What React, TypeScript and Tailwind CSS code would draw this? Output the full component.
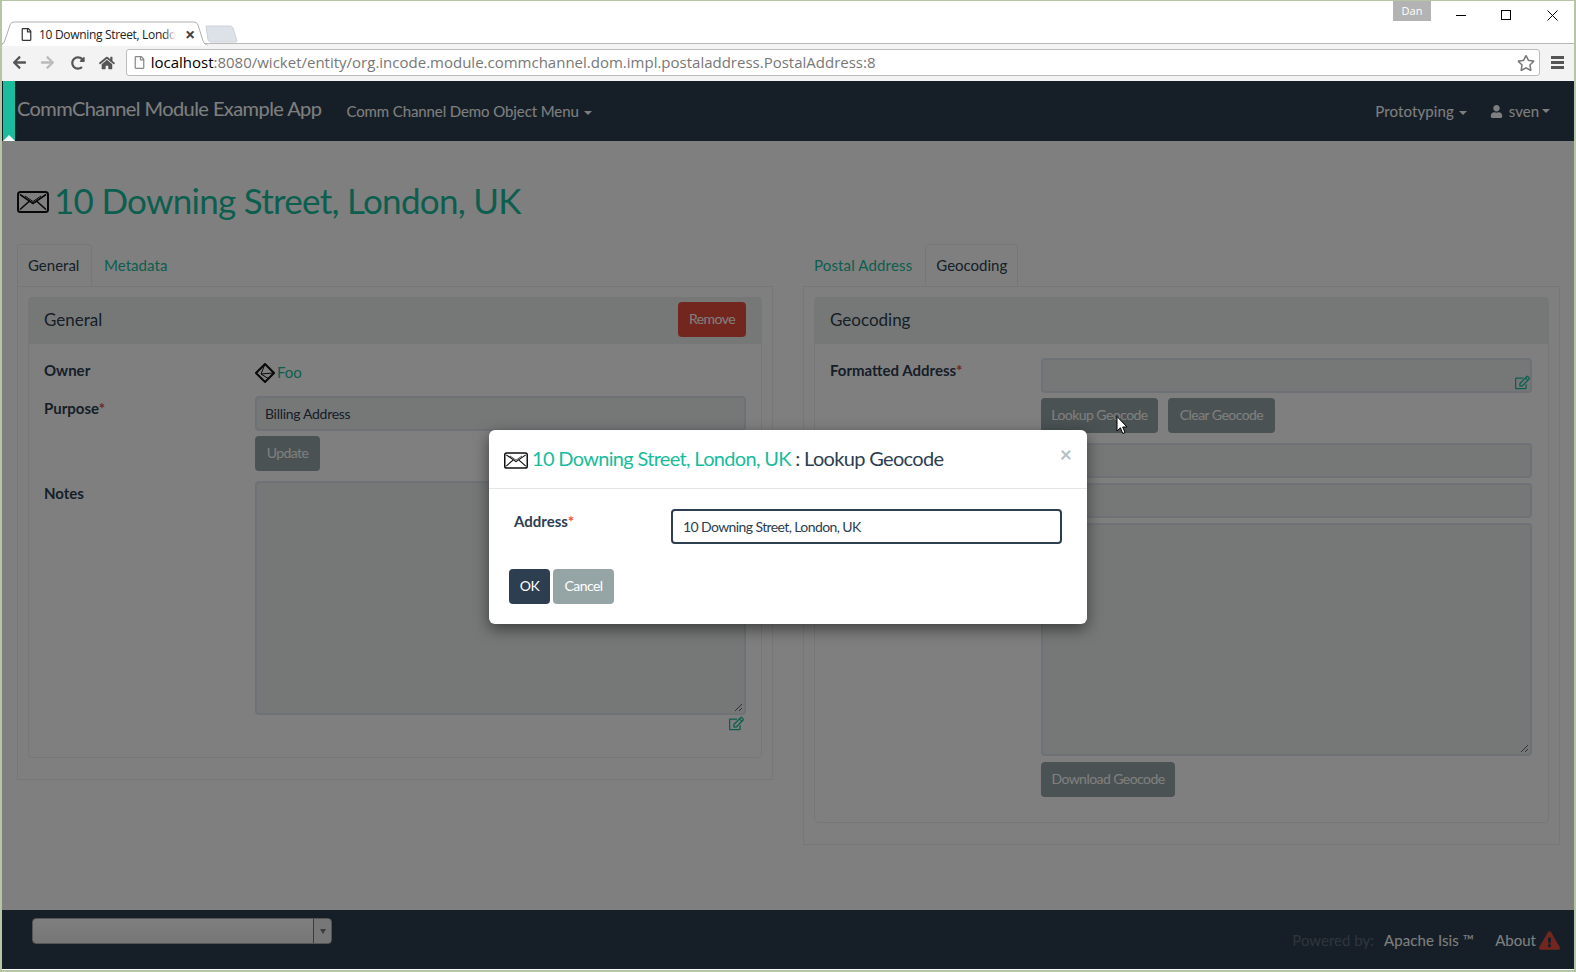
import { FaArrowLeft, FaArrowRight, FaRedoAlt, FaHome, FaRegFile, FaRegStar, FaUser, FaRegEdit, FaExclamationTriangle } from 'react-icons/fa';

const Envelope = ({ className }: { className: string }) => (
    <svg viewBox="0 0 32 22" className={className} fill="none" stroke="#111" strokeWidth="1.6">
        <rect x="1" y="1" width="30" height="20" rx="2.5" strokeWidth="2" />
        <path d="M3 3.5 L16 12.5 L29 3.5 M3 18.5 L12 10.5 M29 18.5 L20 10.5" />
        <path d="M8 5 L16 10.5 L24 5" strokeWidth="1" />
    </svg>
);

const Caret = ({ className = 'ml-[5px]' }: { className?: string }) => (
    <span className={`inline-block w-0 h-0 align-middle border-x-[4px] border-x-transparent border-t-[4px] border-t-white ${className}`} />
);

const ResizeGrip = () => (
    <svg viewBox="0 0 9 9" className="absolute right-[1px] bottom-[1px] w-[9px] h-[9px]" stroke="#666" fill="none">
        <path d="M1 8 L8 1 M5 8 L8 5" />
    </svg>
);

const TextBox = ({ className = '', value = '', grip }: { className?: string; value?: string; grip?: boolean }) => (
    <div className={`relative bg-[#ecf0f1] border-2 border-[#dce4ec] rounded-[4px] px-[8px] text-[14px] tracking-[-0.3px] text-[#2c3e50] flex items-center ${className}`}>
        {value}
        {grip && <ResizeGrip />}
    </div>
);

const Btn = ({ label, className }: { label: string; className: string }) => (
    <div className={`h-[35px] pb-[3px] rounded-[4px] text-white text-[14px] tracking-[-0.55px] whitespace-nowrap flex items-center justify-center ${className}`}>
        {label}
    </div>
);

const EditIcon = ({ className = '' }: { className?: string }) => <FaRegEdit className={`text-[15px] text-[#18bc9c] ${className}`} />;

const Tab = ({ label, active, className = '' }: { label: string; active?: boolean; className?: string }) =>
    active ? (
        <div className={`h-[42px] flex items-center text-[15px] text-[#2c3e50] border border-b-0 border-[#ecf0f1] bg-white rounded-t-[4px] -mb-px relative ${className}`}>
            {label}
        </div>
    ) : (
        <div className={`h-[42px] flex items-center text-[15px] text-[#18bc9c] ${className}`}>{label}</div>
    );

const BrowserChrome = () => (
    <div className="shrink-0 font-['Open_Sans',sans-serif]">
        <div className="h-[43px] relative bg-white border-b border-[#b8b8b8]">
            <svg viewBox="0 0 210 25" className="absolute left-0 top-[20px] w-[210px] h-[25px]">
                <path d="M0 23 H0 Q2 23 3 19 L8 4 Q9 1 12 1 H192 Q195 1 196 4 L201 20 Q202 23 205 24 V25 H0 Z" fill="#fff" stroke="#b0b0b0" />
                <path d="M0 25 H205" stroke="#fff" strokeWidth="2" />
            </svg>
            <div className="absolute left-[18px] top-[24px] flex items-center">
                <FaRegFile className="text-[13px] text-[#333] shrink-0" />
                <span className="relative ml-[6px] text-[12px] leading-[15px] tracking-[-0.32px] text-[#222] w-[137px] whitespace-nowrap">
                    10 Downing Street, Londo
                    <span className="absolute right-0 top-0 w-[12px] h-full bg-linear-to-r from-white/0 to-white" />
                </span>
                <span className="ml-[9px] text-[18px] font-bold leading-none text-[#444]">×</span>
            </div>
            <svg viewBox="0 0 34 18" className="absolute left-[202px] top-[24px] w-[34px] h-[18px]">
                <path d="M2 1 H26 Q28 1 29 3 L33 16 Q33 17 31 17 H7 Q5 17 4 15 Z" fill="#dde1e8" stroke="#ccd0d8" />
            </svg>
            <div className="absolute left-[1391px] top-0 w-[38px] h-[20px] bg-[#b3b3b3] text-[11px] text-white flex items-center justify-center">Dan</div>
            <div className="absolute left-[1454px] top-[14px] w-[10px] h-px bg-black" />
            <div className="absolute left-[1499px] top-[9px] w-[10px] h-[10px] border border-black" />
            <svg viewBox="0 0 11 11" className="absolute left-[1545px] top-[9px] w-[11px] h-[11px]" stroke="#000" fill="none">
                <path d="M0.5 0.5 L10.5 10.5 M10.5 0.5 L0.5 10.5" />
            </svg>
        </div>
        <div className="h-[37px] bg-[#f3f3f3] flex items-center pl-[10px] pr-[10px]">
            <FaArrowLeft className="text-[15px] text-[#555]" />
            <FaArrowRight className="ml-[13px] text-[15px] text-[#bbb]" />
            <FaRedoAlt className="ml-[16px] text-[14px] text-[#555]" />
            <FaHome className="ml-[14px] text-[16px] text-[#555]" />
            <div className="ml-[11px] w-[1423px] h-[27px] bg-white border border-[#bcbcbc] rounded-[3px] flex items-center pl-[6px] text-[15px] text-[#777] whitespace-nowrap">
                <FaRegFile className="text-[13px] text-[#888] mr-[5px] shrink-0" />
                <span className="text-black">localhost</span>
                <span>:8080/wicket/entity/org.incode.module.commchannel.dom.impl.postaladdress.PostalAddress:8</span>
                <FaRegStar className="ml-auto mr-[4px] text-[18px] text-[#777]" />
            </div>
            <div className="ml-[11px] flex flex-col gap-[2px]">
                <div className="w-[13px] h-[3px] bg-[#555]" />
                <div className="w-[13px] h-[3px] bg-[#555]" />
                <div className="w-[13px] h-[3px] bg-[#555]" />
            </div>
        </div>
    </div>
);

const App = () => {
    return (
        <div className="relative w-[1576px] h-[972px] overflow-hidden bg-white font-['Lato',sans-serif] border-t border-x-2 border-b-2 border-[#b5c6a5]">
            <BrowserChrome />

            <div className="relative h-[888px] flex flex-col">
                <nav className="h-[60px] shrink-0 bg-[#2c3e50] text-white flex items-center pl-[15px] pr-[24px]">
                    <span className="text-[20px] tracking-[-0.57px] mb-[6px]">CommChannel Module Example App</span>
                    <span className="ml-[25px] text-[15px] tracking-[-0.1px]">Comm Channel Demo Object Menu<Caret /></span>
                    <span className="ml-auto text-[15px] tracking-[0.1px]">Prototyping<Caret /></span>
                    <span className="ml-[23px] text-[15px] flex items-center">
                        <FaUser className="text-[13px] mr-[6px]" />sven<Caret className="ml-[3px]" />
                    </span>
                </nav>

                <main className="flex-1 bg-white px-[15px]">
                    <h1 className="mt-[39px] h-[40px] flex items-center text-[35px] tracking-[-0.72px] text-[#18bc9c] whitespace-nowrap">
                        <Envelope className="w-[32px] h-[22px] mr-[5px] mt-[4px]" />
                        10 Downing Street, London, UK
                    </h1>

                    <div className="mt-[24px] grid grid-cols-[756px_757px] gap-x-[30px] items-start">
                        <div>
                            <div className="flex"><Tab label="General" active className="w-[75px] pl-[10px]" /><Tab label="Metadata" className="pl-[12px] tracking-[0.05px]" /></div>
                            <div className="border border-[#ecf0f1] p-[10px] pb-[21px]">
                                <div className="border border-[#ecf0f1] rounded-[4px] h-[461px]">
                                    <div className="h-[46px] bg-[#ecf0f1] flex items-start pt-[4px] pl-[15px] pr-[15px] text-[17px] text-[#2c3e50]">
                                        <span className="mt-[5px]">General</span>
                                        <Btn label="Remove" className="ml-auto w-[68px] bg-[#e74c3c]" />
                                    </div>
                                    <div className="grid grid-cols-[211px_491px] pl-[15px] pt-[15px] text-[15px] text-[#2c3e50]">
                                        <div className="font-bold h-[37px]">Owner</div>
                                        <div className="h-[37px] flex items-start text-[15px] text-[#18bc9c]">
                                            <svg viewBox="0 0 20 20" className="w-[20px] h-[20px] mr-[2px] mt-[4px]" fill="none" stroke="#111" strokeWidth="2">
                                                <path d="M10 1 L19 10 L10 19 L1 10 Z" />
                                                <path d="M10 1 L6 11 L14 16 M6 11 L18 10" strokeWidth="1" />
                                            </svg>
                                            <span className="mt-[2px]">Foo</span>
                                        </div>
                                        <div className="font-bold pt-px">Purpose<span className="text-[#e74c3c]">*</span></div>
                                        <div>
                                            <TextBox className="h-[35px]" value="Billing Address" />
                                            <Btn label="Update" className="mt-[5px] w-[65px] bg-[#95a5a6]" />
                                        </div>
                                        <div className="font-bold mt-[11px]">Notes</div>
                                        <div className="mt-[10px]">
                                            <TextBox className="h-[234px]" grip />
                                            <div className="flex justify-end pr-[2px] mt-px"><EditIcon /></div>
                                        </div>
                                    </div>
                                </div>
                            </div>
                        </div>

                        <div>
                            <div className="flex"><Tab label="Postal Address" className="pl-[11px] pr-[13px] tracking-[0.15px]" /><Tab label="Geocoding" active className="px-[10px]" /></div>
                            <div className="border border-[#ecf0f1] p-[10px] pb-[21px]">
                                <div className="border border-[#ecf0f1] rounded-[4px] h-[526px]">
                                    <div className="h-[46px] pb-[2px] bg-[#ecf0f1] flex items-center pl-[15px] text-[17px] text-[#2c3e50]">Geocoding</div>
                                    <div className="grid grid-cols-[211px_491px] pl-[15px] pt-[14px] text-[15px] text-[#2c3e50]">
                                        <div className="font-bold pt-[1px]">Formatted Address<span className="text-[#e74c3c]">*</span></div>
                                        <div className="flex flex-col items-start gap-[5px]">
                                            <div className="relative w-full">
                                                <TextBox className="h-[35px] w-full" />
                                                <EditIcon className="absolute right-[2px] bottom-[3px]" />
                                            </div>
                                            <div className="flex gap-[10px]">
                                                <Btn label="Lookup Geocode" className="w-[117px] bg-[#95a5a6]" />
                                                <Btn label="Clear Geocode" className="w-[107px] bg-[#95a5a6]" />
                                            </div>
                                            <TextBox className="h-[35px] w-full mt-[5px]" />
                                            <TextBox className="h-[35px] w-full" />
                                            <TextBox className="h-[233px] w-full" grip />
                                            <Btn label="Download Geocode" className="w-[134px] mt-px bg-[#95a5a6]" />
                                        </div>
                                    </div>
                                </div>
                            </div>
                        </div>
                    </div>
                </main>

                <footer className="h-[59px] shrink-0 bg-[#2c3e50] text-white flex items-start pl-[30px] pr-[14px] text-[15px]">
                    <div className="mt-[8px] w-[300px] h-[26px] bg-linear-to-b from-white to-[#ededed] border border-[#aaa] rounded-[4px] flex justify-end">
                        <div className="w-[18px] border-l border-[#777] bg-[#eee] rounded-r-[4px] flex items-center justify-center">
                            <span className="w-0 h-0 border-x-[3px] border-x-transparent border-t-[5px] border-t-[#777]" />
                        </div>
                    </div>
                    <div className="ml-auto mt-[19px] flex items-center">
                        <span className="text-[#5e6b78]">Powered by:</span>
                        <span className="ml-[10px] tracking-[0.1px]">Apache Isis ™</span>
                        <span className="ml-[21px]">About</span>
                        <FaExclamationTriangle className="ml-[3px] text-[21px] text-[#e74c3c]" />
                    </div>
                </footer>

                <div className="absolute inset-0 bg-black/50" />

                <div className="absolute left-px top-0 w-[12px] h-[60px] bg-[#1abc9c] flex items-end justify-center">
                    <span className="w-0 h-0 border-x-[6px] border-x-transparent border-b-[6px] border-b-white" />
                </div>

                <svg viewBox="0 0 12 19" className="absolute left-[1114px] top-[335px] w-[12px] h-[19px]">
                    <path d="M1 0.5 V15 L4.4 11.8 L6.8 17.5 L9 16.5 L6.7 11 H11 Z" fill="#fff" stroke="#000" />
                </svg>

                <div className="absolute left-[487px] top-[349px] w-[598px] h-[194px] bg-white rounded-[6px] shadow-[0_5px_15px_rgba(0,0,0,0.5)]">
                    <div className="h-[59px] border-b border-[#e5e5e5] flex items-center pl-[15px] text-[20px] tracking-[-0.68px] text-[#2c3e50] relative">
                        <Envelope className="w-[24px] h-[17px] mr-[4px] mt-[3px]" />
                        <span className="text-[#18bc9c] -mt-[2px]">10 Downing Street, London, UK</span>
                        <span className="-mt-[2px]">&nbsp;: Lookup Geocode</span>
                        <span className="absolute right-[15px] top-[8px] text-[21px] tracking-normal font-bold text-[#b4c0c4]">×</span>
                    </div>
                    <div className="flex pl-[25px] pt-[21px] text-[15px] text-[#2c3e50]">
                        <div className="font-bold w-[157px]">Address<span className="text-[#e74c3c]">*</span></div>
                        <div className="w-[391px] h-[35px] -mt-px border-2 border-[#2c3e50] rounded-[4px] px-[10px] flex items-center text-[14px] tracking-[-0.6px]">10 Downing Street, London, UK</div>
                    </div>
                    <div className="flex gap-[3px] pl-[20px] mt-[25px]">
                        <Btn label="OK" className="w-[41px] bg-[#2c3e50]" />
                        <Btn label="Cancel" className="w-[61px] bg-[#95a5a6]" />
                    </div>
                </div>
            </div>
        </div>
    );
};

export default App;
